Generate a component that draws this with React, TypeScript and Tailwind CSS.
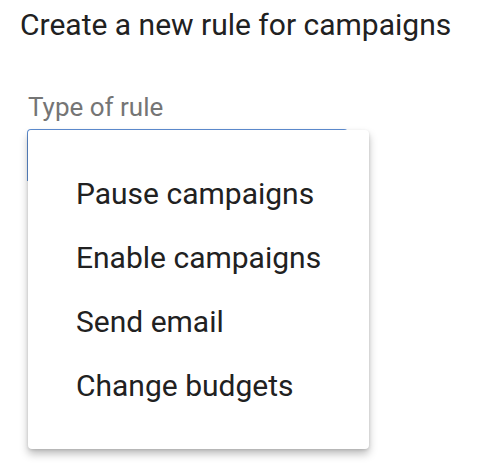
const items = ['Pause campaigns', 'Enable campaigns', 'Send email', 'Change budgets'];

export default function App() {
  return (
    <div className="h-[465px] w-[485px] bg-white font-['Roboto',sans-serif]">
      <h1 className="pl-[20px] pt-[7px] text-[30px] leading-[36px] text-[#212121]">
        Create a new rule for campaigns
      </h1>
      <div className="ml-[27px] mt-[49px] w-[342px]">
        <div className="pl-[1px] text-[26px] leading-[30px] text-[#757575]">Type of rule</div>
        <div className="relative mt-[7px]">
          <div className="h-[52px] w-[321px] rounded-t-[4px] border border-b-0 border-[#5f8fd4]" />
          <div className="absolute left-[1px] top-[1px] w-[341px] rounded-[4px] bg-white pb-[32px] pt-[31px] shadow-[0_5px_9px_rgba(0,0,0,0.26),0_1px_3px_rgba(0,0,0,0.12)]">
            {items.map((item) => (
              <div key={item} className="flex h-[64px] items-center pl-[48px] text-[30px] text-[#212121]">
                {item}
              </div>
            ))}
          </div>
        </div>
      </div>
    </div>
  );
}
